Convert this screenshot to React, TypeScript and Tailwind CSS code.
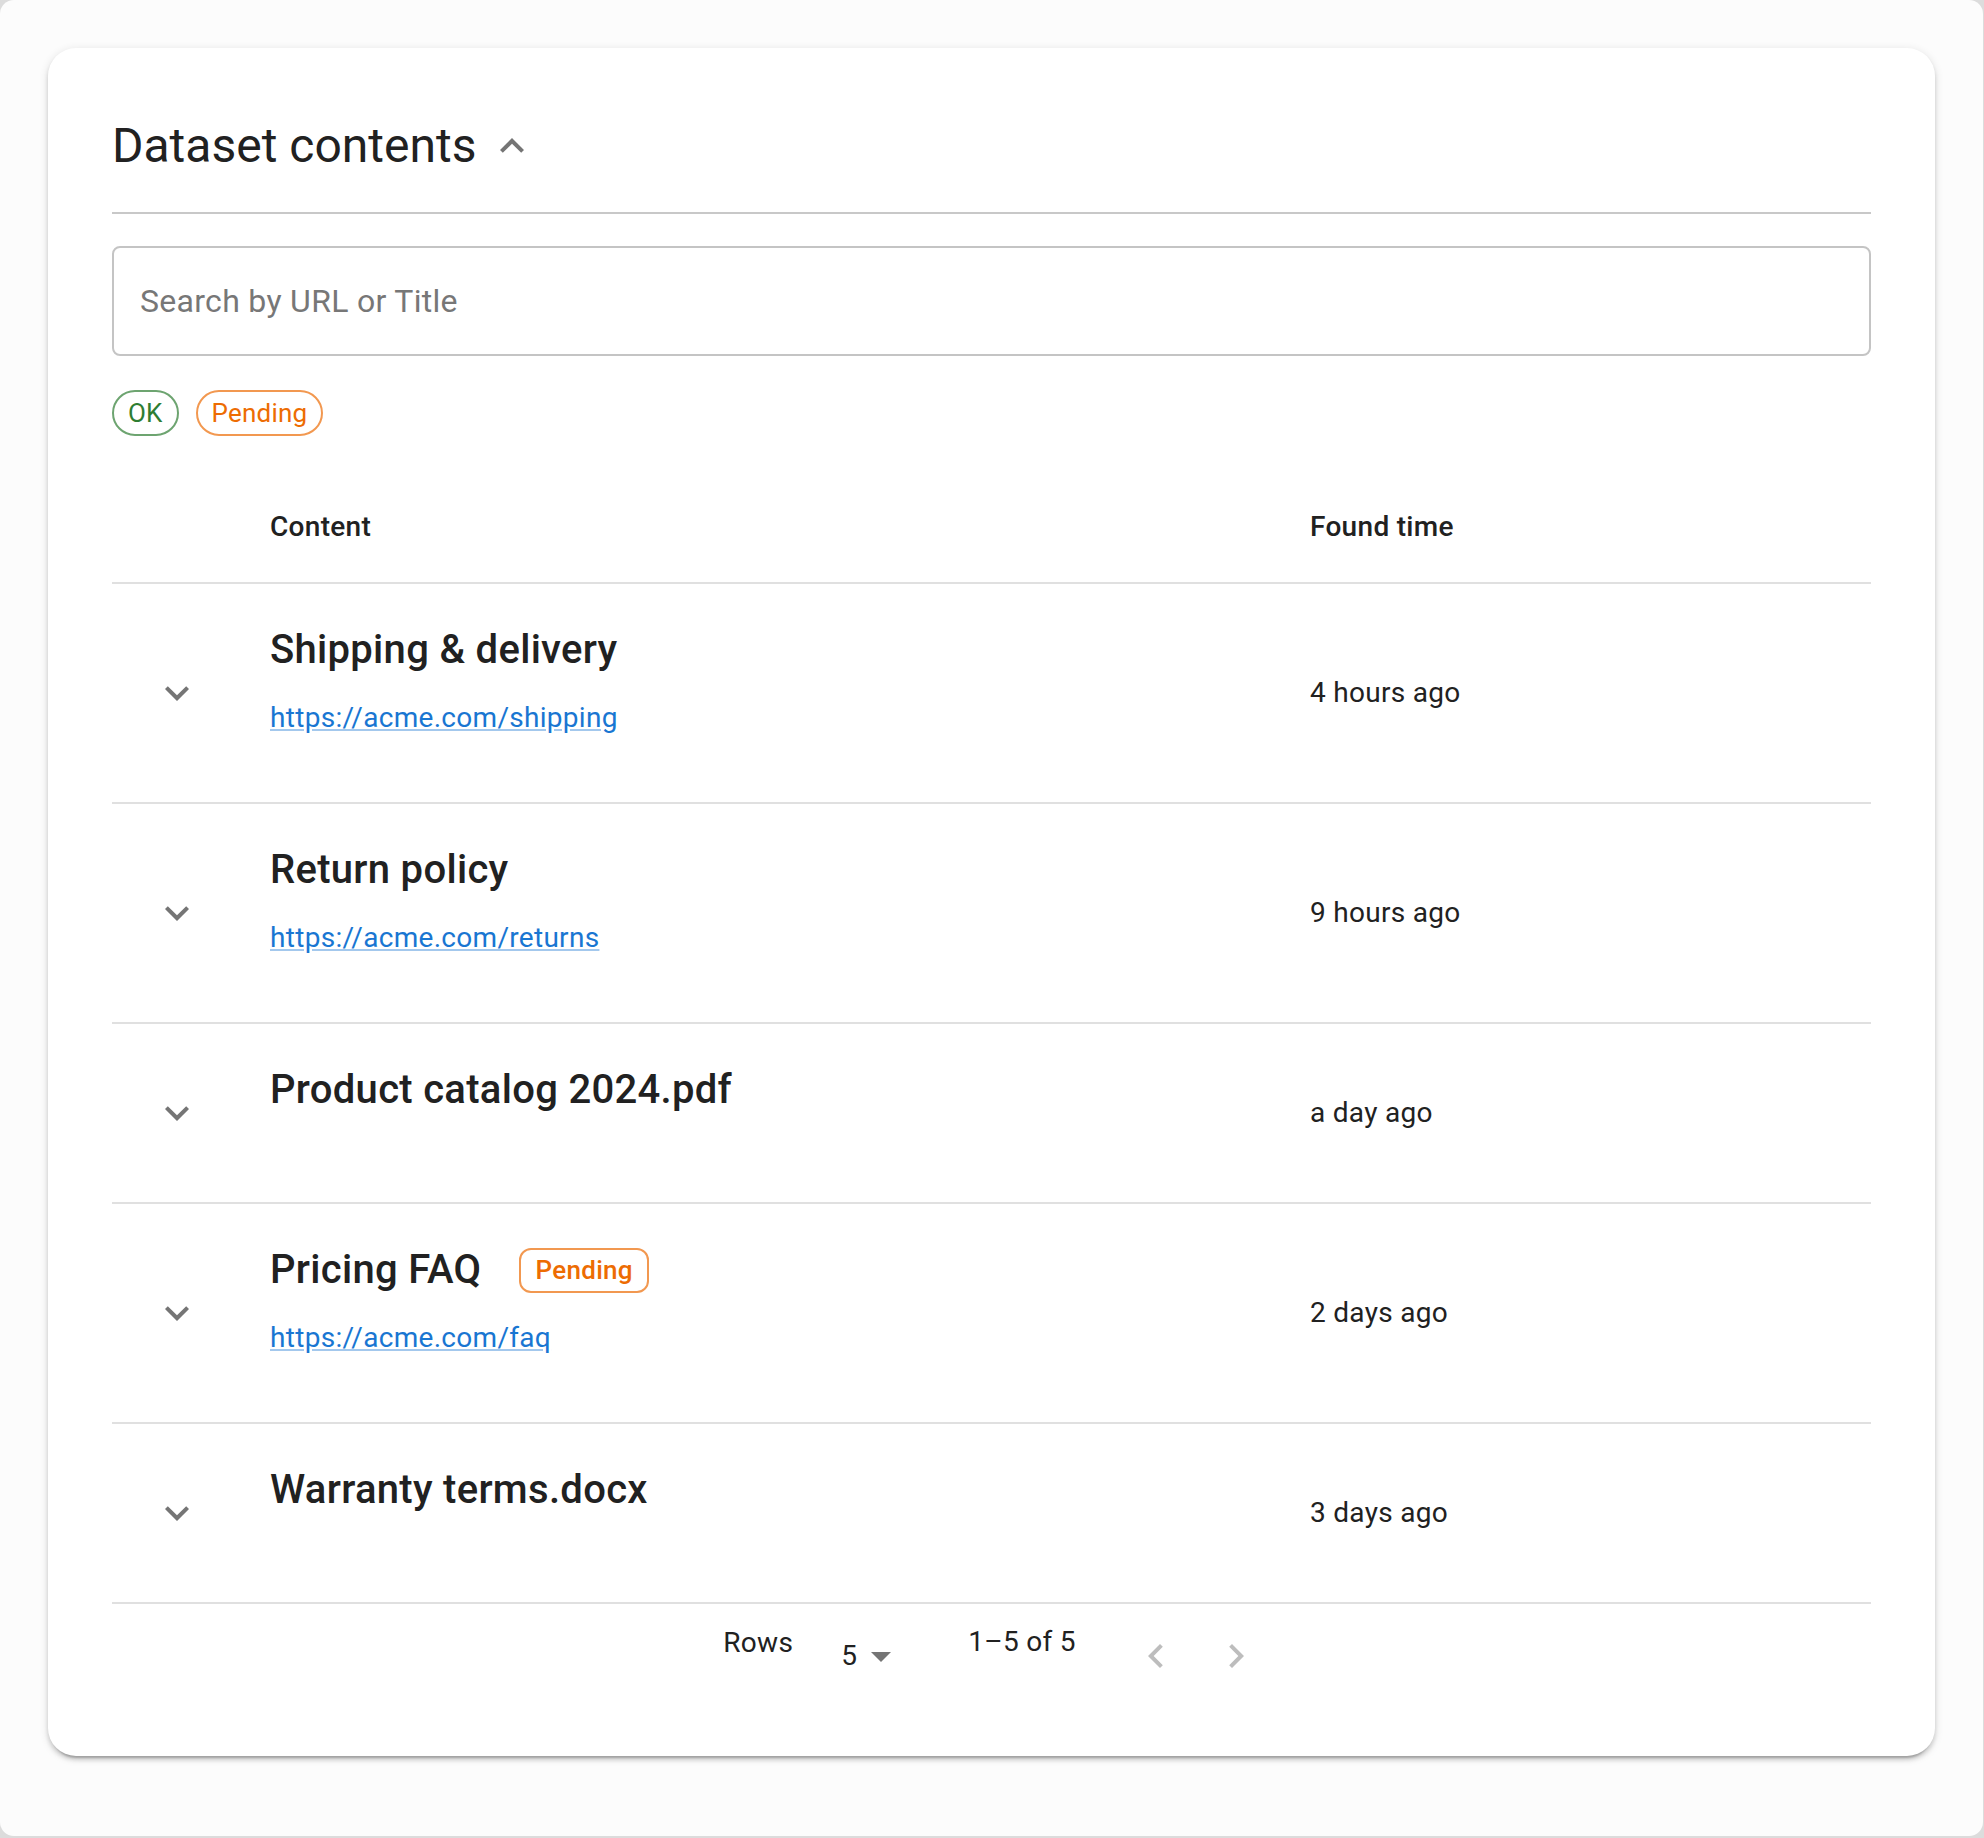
import React from "react"

type Row = {
  title: string
  url?: string
  time: string
  pending?: boolean
}

const rows: Row[] = [
  { title: "Shipping & delivery", url: "https://acme.com/shipping", time: "4 hours ago" },
  { title: "Return policy", url: "https://acme.com/returns", time: "9 hours ago" },
  { title: "Product catalog 2024.pdf", time: "a day ago" },
  { title: "Pricing FAQ", url: "https://acme.com/faq", time: "2 days ago", pending: true },
  { title: "Warranty terms.docx", time: "3 days ago" },
]

// material paths, drawn at 48px
function Icon({ d, className }: { d: string; className?: string }) {
  return (
    <svg viewBox="0 0 24 24" className={className} fill="currentColor" aria-hidden>
      <path d={d} />
    </svg>
  )
}

const EXPAND_MORE = "M16.59 8.59 12 13.17 7.41 8.59 6 10l6 6 6-6z"
const EXPAND_LESS = "M12 8l-6 6 1.41 1.41L12 10.83l4.59 4.58L18 14z"
const CHEVRON_LEFT = "M15.41 7.41 14 6l-6 6 6 6 1.41-1.41L10.83 12z"
const CHEVRON_RIGHT = "M10 6 8.59 7.41 13.17 12l-4.58 4.59L10 18l6-6z"
const ARROW_DROP = "M7 10l5 5 5-5z"

export default function App() {
  return (
    <div className="bg-[#dcdcdc] pr-px pb-[2px] font-['Roboto','Liberation_Sans',sans-serif] text-[#212121]">
      <div className="h-[1836px] rounded-[14px] bg-[#fcfcfc] px-[48px] pt-[48px]">
        <section className="rounded-[28px] bg-white px-[64px] pt-[66px] pb-[48px] shadow-[0_6px_2px_-4px_rgba(0,0,0,0.2),0_4px_4px_0_rgba(0,0,0,0.14),0_2px_10px_0_rgba(0,0,0,0.12)]">
          <Header />
          <Search />
          <Filters />
          <Table />
          <Pagination />
        </section>
      </div>
    </div>
  )
}

function Header() {
  return (
    <>
      <div className="flex h-[64px] items-center">
        <h2 className="text-[48px] leading-[64px] font-normal">Dataset contents</h2>
        <button className="ml-[12px] text-[#757575]">
          <Icon d={EXPAND_LESS} className="h-[48px] w-[48px]" />
        </button>
      </div>
      <div className="mt-[34px] h-[2px] bg-[#c8c8c8]" />
    </>
  )
}

function Search() {
  return (
    <div className="mt-[32px] flex h-[110px] items-center rounded-[8px] border-2 border-[#c4c4c4] pl-[26px]">
      <input
        placeholder="Search by URL or Title"
        className="w-full bg-transparent text-[32px] tracking-[0.3px] outline-none placeholder:text-[#777]"
      />
    </div>
  )
}

function Filters() {
  return (
    <div className="mt-[34px] flex gap-[17px] tracking-[0.2px]">
      <span className="flex h-[46px] items-center rounded-full border-2 border-[#6da470] px-[14px] text-[26px] text-[#2e7d32]">
        OK
      </span>
      <span className="flex h-[46px] items-center rounded-full border-2 border-[#f29850] px-[14px] text-[26px] text-[#ed6c02]">
        Pending
      </span>
    </div>
  )
}

function Table() {
  return (
    <div className="mt-[36px]">
      <div className="grid h-[112px] grid-cols-[158px_1fr_561px] items-center border-b-2 border-[#e0e0e0] text-[28px] font-medium tracking-[0.3px]">
        <span />
        <span>Content</span>
        <span>Found time</span>
      </div>
      {rows.map((r) => (
        <TableRow key={r.title} row={r} />
      ))}
    </div>
  )
}

function TableRow({ row: r }: { row: Row }) {
  return (
    <div className="grid grid-cols-[158px_1fr_561px] border-b-2 border-[#e0e0e0]">
      <div className="flex items-center pl-[41px] text-[#757575]">
        <Icon d={EXPAND_MORE} className="h-[48px] w-[48px]" />
      </div>
      <div className={r.url ? "pt-[34px] pb-[64px]" : "pt-[34px] pb-[80px]"}>
        <div className="flex h-[64px] items-center">
          <span className="text-[40px] leading-[64px] font-medium tracking-[0.3px]">{r.title}</span>
          {r.pending && (
            <span className="ml-[38px] flex h-[45px] items-center rounded-[12px] border-2 border-[#f29850] px-[14px] text-[26px] font-medium tracking-[0.3px] text-[#ed6c02]">
              Pending
            </span>
          )}
        </div>
        {r.url && (
          <a
            href={r.url}
            className="mt-[16px] block w-fit text-[28px] leading-[40px] tracking-[0.3px] text-[#1976d2] underline decoration-[#1976d2]/40"
          >
            {r.url}
          </a>
        )}
      </div>
      <div className="flex items-center text-[28px] tracking-[0.3px]">{r.time}</div>
    </div>
  )
}

function Pagination() {
  return (
    <div className="flex h-[104px] items-start justify-center pb-[0px] text-[28px] leading-[40px] tracking-[0.3px]">
      <span className="mt-[19px]">Rows</span>
      <div className="mt-[32px] ml-[48px] flex items-center">
        <span>5</span>
        <Icon d={ARROW_DROP} className="-my-[4px] h-[48px] w-[48px] text-[#757575]" />
      </div>
      <span className="mt-[18px] ml-[63px]">1–5 of 5</span>
      <Icon d={CHEVRON_LEFT} className="mt-[28px] ml-[56px] h-[48px] w-[48px] text-[#bdbdbd]" />
      <Icon d={CHEVRON_RIGHT} className="mt-[28px] ml-[32px] h-[48px] w-[48px] text-[#bdbdbd]" />
    </div>
  )
}
